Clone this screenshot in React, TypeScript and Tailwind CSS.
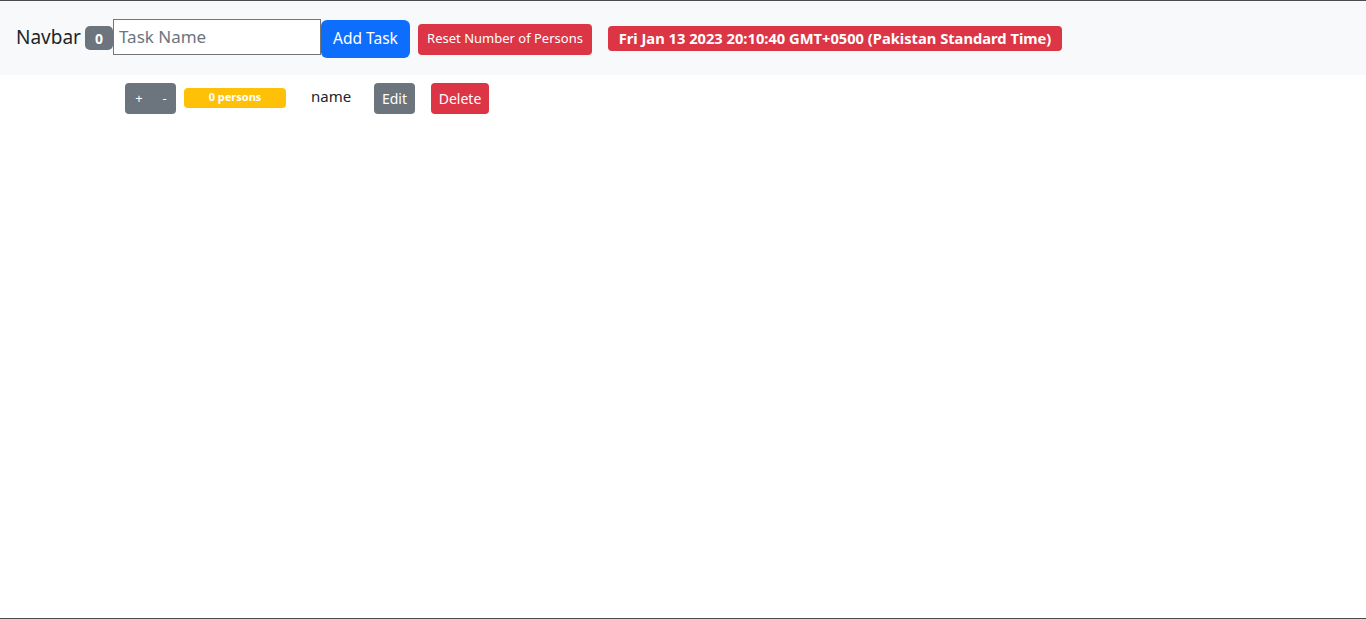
export default function App() {
  return (
    <div className="min-h-[619px] flex flex-col border-t border-b border-[#4a4a4f] bg-white text-[#212529] [font-family:'Noto_Sans','Liberation_Sans',sans-serif]">
      <nav className="h-[74px] bg-[#f8f9fa] flex items-center pl-4">
        <span className="text-[19px] w-[64px] mr-[5px] mb-[2px]">Navbar</span>
        <span className="bg-[#6c757d] text-white text-[14px] font-bold rounded-[5px] w-[28px] h-[24px] flex items-center justify-center">0</span>
        <input
          placeholder="Task Name"
          className="w-[208px] h-[36px] border border-[#767676] bg-white px-[5px] text-[17px] placeholder:text-[#6c757d] outline-none mb-[3px]"
        />
        <button className="bg-[#0d6efd] text-white text-[15.5px] rounded-[6px] w-[89px] h-[38px] mt-[1px]">Add Task</button>
        <button className="bg-[#dc3545] text-white text-[13px] rounded-[4px] w-[174px] h-[31px] ml-[8px] mt-[2px]">Reset Number of Persons</button>
        <span className="bg-[#dc3545] text-white text-[14.7px] font-bold rounded-[4px] h-[25px] w-[454px] ml-[16px] flex items-center justify-center whitespace-nowrap">
          Fri Jan 13 2023 20:10:40 GMT+0500 (Pakistan Standard Time)
        </span>
      </nav>
      <div className="flex items-center pl-[125px] pt-[8px]">
        <button className="bg-[#6c757d] text-white text-[13px] rounded-l-[4px] w-[28px] h-[31px]">+</button>
        <button className="bg-[#6c757d] text-white text-[13px] rounded-r-[4px] w-[23px] h-[31px]">-</button>
        <span className="bg-[#ffc107] text-white text-[11px] font-bold rounded-[4px] w-[102px] h-[20px] ml-[8px] mb-[2px] flex items-center justify-center">0 persons</span>
        <span className="text-[15px] w-[39px] ml-[25px] mb-[4px]">name</span>
        <button className="bg-[#6c757d] text-white text-[14px] rounded-[4px] w-[41px] h-[31px] ml-[24px]">Edit</button>
        <button className="bg-[#dc3545] text-white text-[14px] rounded-[4px] w-[58px] h-[31px] ml-[16px]">Delete</button>
      </div>
    </div>
  );
}
